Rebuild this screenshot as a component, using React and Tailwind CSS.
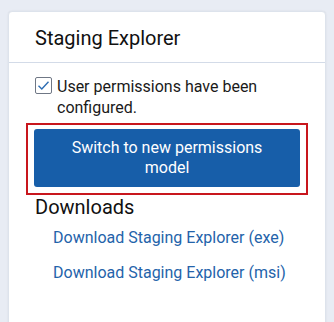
import React from "react";

export default function App() {
  return (
    <div
      className="w-[334px] h-[322px] overflow-hidden bg-[#e8ecf4] pt-[11px] pl-[8px]"
      style={{ fontFamily: "Roboto, 'Noto Sans', sans-serif" }}
    >
      <div className="w-[318px] h-[330px] bg-white rounded-[4px] border border-[#dde3ec] shadow-[0_0_2px_rgba(0,0,0,0.08)]">
        <div className="h-[51px] border-b border-[#d3dbe8] pl-[26px] flex items-center">
          <span className="text-[20px] leading-[24px] text-[#111] mt-[1px]">Staging Explorer</span>
        </div>
        <div className="pl-[26px] pr-[10px] pt-[13px]">
          <div className="flex items-start">
            <div className="w-[17px] h-[17px] border border-[#6f7785] rounded-[2px] flex items-center justify-center shrink-0 mt-[1px]">
              <svg width="13" height="11" viewBox="0 0 13 11" fill="none">
                <path d="M1.5 5.8 L4.8 9 L11.5 1.8" stroke="#2d6db3" strokeWidth="1.4" />
              </svg>
            </div>
            <div className="ml-[5px] text-[16px] leading-[21px] text-[#1a1a1a] w-[230px]">
              User permissions have been configured.
            </div>
          </div>
          <div className="mt-[5px] ml-[-9px] w-[282px] border-2 border-[#c8161d] px-[6px] pt-[4px] pb-[6px]">
            <button className="w-[266px] h-[58px] bg-[#175ea9] rounded-[3px] text-white text-[16px] leading-[20px] px-[30px]">
              Switch to new permissions model
            </button>
          </div>
          <div className="mt-0 text-[20px] leading-[24px] text-[#111]">Downloads</div>
          <div className="pl-[18px] mt-[9px] flex flex-col gap-[15px]">
            <a className="text-[16px] leading-[20px] text-[#2463aa]">Download Staging Explorer (exe)</a>
            <a className="text-[16px] leading-[20px] text-[#2463aa]">Download Staging Explorer (msi)</a>
          </div>
        </div>
      </div>
    </div>
  );
}
